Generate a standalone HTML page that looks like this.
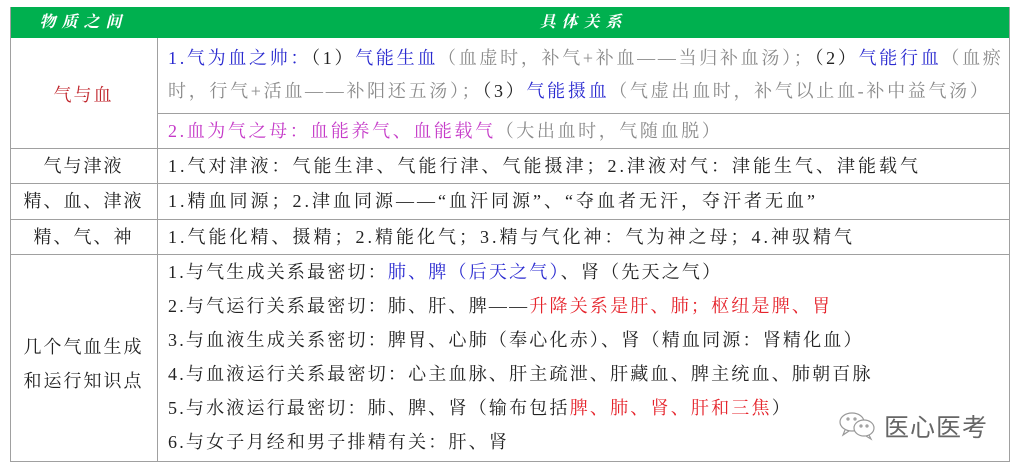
<!DOCTYPE html>
<html><head><meta charset="utf-8"><style>
body{margin:0;width:1018px;height:470px;background:#fff;overflow:hidden;font-family:"Liberation Serif","Noto Serif CJK SC",serif;}
.l{position:absolute;background:#a0a0a0;}
.t{position:absolute;white-space:nowrap;font-size:18px;letter-spacing:3px;color:#222;line-height:20px;}
.s{letter-spacing:2.2px}
.c{text-align:center;letter-spacing:2px}
.b{color:#2a2ad0}.g{color:#8a8a8a}.m{color:#c53ac8}.r{color:#e5232b}.dr{color:#c0262c}
.h{position:absolute;top:7px;height:31px;background:#00b04f;color:#fff;font-size:16px;font-weight:bold;line-height:31px;text-align:center;letter-spacing:6px;font-style:italic}
</style></head><body>
<div class="h" style="left:10px;width:147px">物质之间</div>
<div class="h" style="left:157px;width:853px">具体关系</div>
<div class="l" style="left:10px;top:7px;width:1px;height:455px"></div>
<div class="l" style="left:1009px;top:7px;width:1px;height:455px"></div>
<div class="l" style="left:157px;top:38px;width:1px;height:424px"></div>
<div class="l" style="left:10px;top:461px;width:1000px;height:1px"></div>
<div class="l" style="left:157px;top:113px;width:853px;height:1px"></div>
<div class="l" style="left:10px;top:148px;width:1000px;height:1px"></div>
<div class="l" style="left:10px;top:183px;width:1000px;height:1px"></div>
<div class="l" style="left:10px;top:219px;width:1000px;height:1px"></div>
<div class="l" style="left:10px;top:254px;width:1000px;height:1px"></div>

<div class="t c dr" style="left:10px;width:147px;top:85px">气与血</div>
<div class="t" style="left:168px;top:48px;letter-spacing:2.7px"><span class="b">1.气为血之帅：</span>（1）<span class="b">气能生血</span><span class="g">（血虚时，补气+补血——当归补血汤）；</span>（2）<span class="b">气能行血</span><span class="g">（血瘀</span></div>
<div class="t g" style="left:168px;top:81px;letter-spacing:2.7px">时，行气+活血——补阳还五汤）；<span style="color:#222">（3）</span><span class="b">气能摄血</span>（气虚出血时，补气以止血-补中益气汤）</div>
<div class="t" style="left:168px;top:121px;letter-spacing:2.6px"><span class="m">2.血为气之母：血能养气、血能载气</span><span class="g">（大出血时，气随血脱）</span></div>

<div class="t c" style="left:10px;width:147px;top:156px">气与津液</div>
<div class="t" style="left:168px;top:156px">1.气对津液：气能生津、气能行津、气能摄津；2.津液对气：津能生气、津能载气</div>
<div class="t c" style="left:10px;width:147px;top:191px">精、血、津液</div>
<div class="t" style="left:168px;top:191px">1.精血同源；2.津血同源——“血汗同源”、“夺血者无汗，夺汗者无血”</div>
<div class="t c" style="left:10px;width:147px;top:227px">精、气、神</div>
<div class="t" style="left:168px;top:227px">1.气能化精、摄精；2.精能化气；3.精与气化神：气为神之母；4.神驭精气</div>

<div class="t c" style="left:10px;width:147px;top:330px;line-height:34px">几个气血生成<br>和运行知识点</div>
<div class="t s" style="left:168px;top:262px">1.与气生成关系最密切：<span class="b">肺、脾（后天之气）</span>、肾（先天之气）</div>
<div class="t s" style="left:168px;top:296px">2.与气运行关系最密切：肺、肝、脾——<span class="r">升降关系是肝、肺；枢纽是脾、胃</span></div>
<div class="t s" style="left:168px;top:330px">3.与血液生成关系密切：脾胃、心肺（奉心化赤）、肾（精血同源：肾精化血）</div>
<div class="t s" style="left:168px;top:364px">4.与血液运行关系最密切：心主血脉、肝主疏泄、肝藏血、脾主统血、肺朝百脉</div>
<div class="t s" style="left:168px;top:398px">5.与水液运行最密切：肺、脾、肾（输布包括<span class="r">脾、肺、肾、肝和三焦</span>）</div>
<div class="t s" style="left:168px;top:432px">6.与女子月经和男子排精有关：肝、肾</div>

<svg style="position:absolute;left:838px;top:410px" width="40" height="32" viewBox="0 0 40 32" fill="none" stroke="#999" stroke-width="1.2">
<ellipse cx="14" cy="12" rx="12" ry="9"/><path d="M7 20 L5 25 L11 21"/>
<ellipse cx="26" cy="18" rx="10" ry="8" fill="#fff"/><path d="M31 25 L33 29 L28 26"/>
<circle cx="10" cy="9" r="1"/><circle cx="17" cy="9" r="1"/><circle cx="23" cy="16" r="1"/><circle cx="29" cy="16" r="1"/>
</svg>
<div style="position:absolute;left:884px;top:411px;font-family:'Noto Sans CJK SC',sans-serif;font-size:25px;color:#666;letter-spacing:1px;line-height:30px">医心医考</div>
</body></html>
